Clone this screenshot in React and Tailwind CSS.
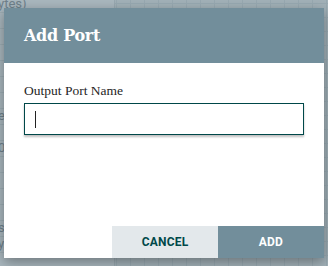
import React from 'react';

export default function App() {
  const rows = ['ytes)', '', '', '', '', '', '', 'e', '', '0', '', '', '', '', 's', 'y'];

  return (
    <div className="relative w-[328px] h-[266px] overflow-hidden bg-[#a2b1b8] bg-[linear-gradient(#98a9b1_1px,transparent_1px),linear-gradient(90deg,#98a9b1_1px,transparent_1px)] bg-[size:14px_14px] bg-[position:4px_3px]">
      {/* canvas behind the dialog */}
      <div className="absolute left-0 -top-[3px] w-[115px] h-[272px] bg-[#a9b7be] border-r border-[#98a8b0] flex flex-col">
        {rows.map((r, i) => (
          <div key={i} className="h-[16px] shrink-0 -ml-[2px] text-[13px] leading-[14px] text-[#6f818b] font-['Roboto',sans-serif] border-b border-[#9dadb4]">
            {r}
          </div>
        ))}
      </div>

      {/* dialog */}
      <div className="absolute left-[4px] top-[8px] w-[320px] h-[250px] bg-white flex flex-col shadow-[0_4px_12px_rgba(0,0,0,0.35)]">
        <div className="h-[55px] bg-[#728e9b] flex items-center px-[20px]">
          <h1 className="text-white text-[16px] font-bold font-['DejaVu_Serif',serif] pt-[1px] tracking-[-0.3px]">Add Port</h1>
        </div>
        <div className="flex-1 px-[20px] pt-[20px]">
          <div className="text-[13.5px] leading-[16px] text-[#262626] font-['Liberation_Serif',serif]">Output Port Name</div>
          <div className="mt-[4px] h-[32px] border border-[#004849] bg-white shadow-[0_2px_2px_rgba(0,0,0,0.25)] flex items-center pl-[10px]">
            <span className="w-[1px] h-[17px] bg-[#222]" />
          </div>
        </div>
        <div className="flex justify-end">
          <button className="w-[106px] h-[32px] bg-[#e3e8eb] text-[#004849] text-[12px] font-bold font-['Roboto',sans-serif] tracking-[0.2px]">CANCEL</button>
          <button className="w-[106px] h-[32px] bg-[#728e9b] text-white text-[12px] font-bold font-['Roboto',sans-serif] tracking-[0.2px]">ADD</button>
        </div>
      </div>
    </div>
  );
}
